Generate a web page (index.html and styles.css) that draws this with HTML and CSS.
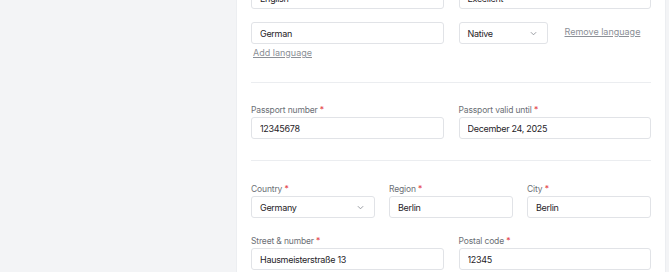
FILE: index.html
```html
<!DOCTYPE html>
<html lang="en">
<head>
<meta charset="UTF-8">
<meta name="viewport" content="width=device-width, initial-scale=1.0">
<title>Profile details</title>
<link rel="stylesheet" href="styles.css">
</head>
<body>
<div class="page">
  <div class="side"></div>
  <div class="card">

    <div class="section">
      <label class="label">Languages</label>
      <div class="lang-list">
        <div class="row two">
          <input type="text" class="field" value="English">
          <div class="select">
            <span>Excellent</span>
            <svg class="chev" viewBox="0 0 8 5"><path d="M1 1l3 3 3-3"/></svg>
          </div>
        </div>
        <div class="row two">
          <input type="text" class="field" value="German">
          <div class="lang-level">
            <div class="select small">
              <span>Native</span>
              <svg class="chev" viewBox="0 0 8 5"><path d="M1 1l3 3 3-3"/></svg>
            </div>
            <a href="#" class="link remove">Remove language</a>
          </div>
        </div>
      </div>
      <a href="#" class="link add">Add language</a>
    </div>

    <div class="section">
      <div class="row two">
        <div class="group">
          <label class="label">Passport number <span class="req">*</span></label>
          <input type="text" class="field" value="12345678">
        </div>
        <div class="group">
          <label class="label">Passport valid until <span class="req">*</span></label>
          <input type="text" class="field" value="December 24, 2025">
        </div>
      </div>
    </div>

    <div class="section last">
      <div class="row three">
        <div class="group">
          <label class="label">Country <span class="req">*</span></label>
          <div class="select">
            <span>Germany</span>
            <svg class="chev" viewBox="0 0 8 5"><path d="M1 1l3 3 3-3"/></svg>
          </div>
        </div>
        <div class="group">
          <label class="label">Region <span class="req">*</span></label>
          <input type="text" class="field" value="Berlin">
        </div>
        <div class="group">
          <label class="label">City <span class="req">*</span></label>
          <input type="text" class="field" value="Berlin">
        </div>
      </div>
      <div class="row two">
        <div class="group">
          <label class="label">Street &amp; number <span class="req">*</span></label>
          <input type="text" class="field" value="Hausmeisterstraße 13">
        </div>
        <div class="group">
          <label class="label">Postal code <span class="req">*</span></label>
          <input type="text" class="field" value="12345">
        </div>
      </div>
    </div>

  </div>
</div>
</body>
</html>
```

FILE: styles.css
```css
body {
  margin: 0;
  font-family: Inter, "Noto Sans", sans-serif;
  background-color: #f3f4f6;
  color: #1f2328;
  overflow: hidden;
}

.page {
  display: flex;
  min-height: 100vh;
}

.side {
  width: 237px;
  flex-shrink: 0;
}

.card {
  width: 428px;
  flex-shrink: 0;
  margin-top: -47px;
  padding: 0 14px;
  box-sizing: border-box;
  background-color: #fff;
  box-shadow: 0 0 0 1px #eceef1;
}

.section {
  padding: 21px 0;
  border-bottom: 1px solid #ebedf0;
}
.section.last {
  padding-top: 22px;
  border-bottom: none;
}

.row {
  display: grid;
  gap: 15px;
}
.row.two {
  grid-template-columns: 1fr 1fr;
}
.row.three {
  grid-template-columns: 1fr 1fr 1fr;
  gap: 14px;
  margin-bottom: 17px;
}

.group {
  display: flex;
  flex-direction: column;
}

.label {
  display: block;
  font-size: 8.5px;
  letter-spacing: -0.15px;
  line-height: 12px;
  color: #6b6f76;
  margin-bottom: 1px;
}
.req {
  color: #e5484d;
}

.lang-list {
  display: flex;
  flex-direction: column;
  gap: 13px;
}

.field, .select {
  box-sizing: border-box;
  height: 22px;
  width: 100%;
  padding: 0 8px;
  border: 1px solid #e1e3e7;
  border-radius: 3px;
  background: #fff;
  font-family: inherit;
  font-size: 9px;
  letter-spacing: -0.3px;
  color: #1f2328;
  outline: none;
  margin: 0;
}

.select {
  display: flex;
  align-items: center;
  justify-content: space-between;
}
.select.small {
  width: 89px;
  flex-shrink: 0;
}

.chev {
  width: 7px;
  height: 5px;
  fill: none;
  stroke: #8b8f96;
  stroke-width: 1;
  margin-right: 2px;
}

.lang-level {
  display: flex;
  align-items: center;
}

.link {
  font-size: 9px;
  line-height: 12px;
  color: #8b8f96;
  text-decoration: underline;
}
.remove {
  margin-left: 17px;
  margin-top: -3px;
}
.add {
  display: block;
  width: max-content;
  margin: 3px 0 2px 2px;
}
```
